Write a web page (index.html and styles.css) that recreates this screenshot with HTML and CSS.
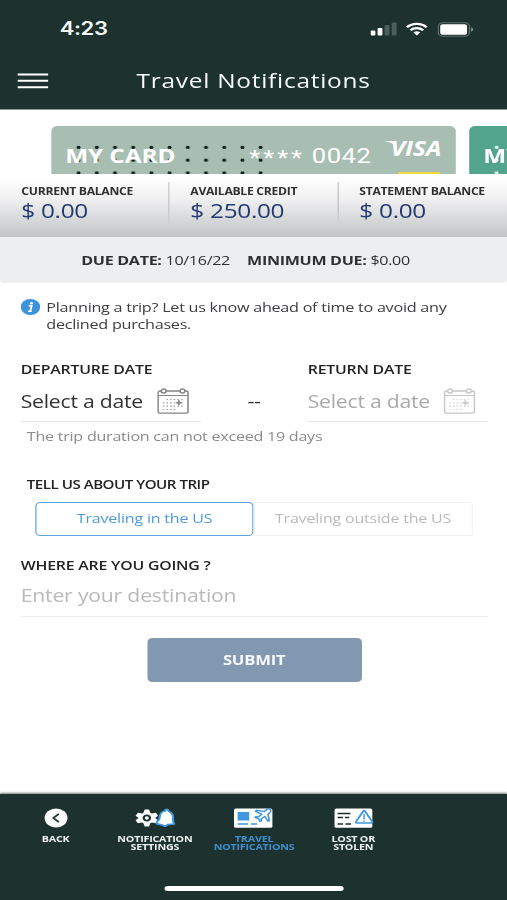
FILE: index.html
```html
<!DOCTYPE html>
<html lang="en">
<head>
<meta charset="utf-8">
<title>Travel Notifications</title>
<link rel="stylesheet" href="styles.css">
</head>
<body>
<svg width="0" height="0" class="defs">
  <symbol id="calendar" viewBox="0 0 26 26">
    <g fill="none" stroke="currentColor" stroke-width="1.3">
      <rect x=".7" y="3" width="24.6" height="22.2" rx="1.6"/>
      <path d="M1 7.6h24" stroke-width="1"/>
      <circle cx="5.3" cy="3" r="2" fill="#fff"/>
      <circle cx="20.7" cy="3" r="2" fill="#fff"/>
    </g>
    <g stroke="currentColor" stroke-width="1.2" stroke-dasharray="1.3 1.7" opacity=".75">
      <path d="M7.5 11.5h14M4.5 14.8h17M4.5 18.2h17M4.5 21.5h11"/>
    </g>
    <path d="M17.8 12.3v5M15.5 14.8h4.6" stroke="currentColor" stroke-width="1.5"/>
  </symbol>
</svg>
<div class="screen">
  <header class="header">
    <div class="status">
      <span class="time">4:23</span>
      <svg class="signal" width="22" height="14" viewBox="0 0 22 14" fill="#fff">
        <rect x="0" y="8.5" width="4" height="5" rx="1"/>
        <rect x="5.8" y="6" width="4" height="7.5" rx="1"/>
        <rect x="11.6" y="3" width="4" height="10.5" rx="1" opacity=".22"/>
        <rect x="17.4" y=".5" width="4" height="13" rx="1" opacity=".22"/>
      </svg>
      <svg class="wifi" width="18" height="14" viewBox="0 0 18 14" fill="none" stroke="#fff" stroke-width="2.3">
        <path d="M.9 5.3a11.5 11.5 0 0 1 16.2 0M3.8 8.3a7.4 7.4 0 0 1 10.4 0"/>
        <path d="M6.2 10.6a4 4 0 0 1 5.6 0L9 13.4z" fill="#fff" stroke="none"/>
      </svg>
      <svg class="battery" width="30" height="15" viewBox="0 0 30 15">
        <rect x=".6" y=".8" width="25.6" height="13.4" rx="3.8" fill="none" stroke="#fff" stroke-opacity=".3" stroke-width="1.1"/>
        <rect x="2.2" y="2.3" width="22" height="10.4" rx="2.3" fill="#fff"/>
        <path d="M27.6 5.2q1.6.8 1.6 2.3t-1.6 2.3z" fill="#fff" opacity=".5"/>
      </svg>
    </div>
    <div class="titlebar">
      <svg class="menu" width="26" height="16" viewBox="0 0 26 16" stroke="#fff" stroke-width="2"><path d="M.5 1.5h25M.5 7.8h25M.5 14.2h25"/></svg>
      <h1 class="title">Travel Notifications</h1>
    </div>
  </header>

  <section class="cards">
    <div class="card">
      <span class="card-name">MY CARD</span>
      <span class="card-number"><span class="stars">****</span> 0042</span>
      <span class="visa">VISA</span>
      <svg class="flag" width="9" height="5" viewBox="0 0 9 5"><path d="M0 0h6.5Q8.500 0 9 5 5 1.200 0 .6z" fill="#fff"/></svg>
      <i class="chip"></i>
    </div>
    <div class="card card-next"><span class="card-name">MY</span></div>
  </section>

  <section class="balances">
    <div class="balance"><span class="label">CURRENT BALANCE</span><span class="amount">$ 0.00</span></div>
    <div class="balance"><span class="label">AVAILABLE CREDIT</span><span class="amount">$ 250.00</span></div>
    <div class="balance"><span class="label">STATEMENT BALANCE</span><span class="amount">$ 0.00</span></div>
  </section>

  <section class="due">
    <span><b>DUE DATE:</b> 10/16/22</span>
    <span><b>MINIMUM DUE:</b> $0.00</span>
  </section>

  <main class="form">
    <div class="info">
      <svg width="16" height="16" viewBox="0 0 16 16"><circle cx="8" cy="8" r="8" fill="#3d92dc"/><circle cx="8.9" cy="4.2" r="1.2" fill="#fff"/><path d="M6.5 6.7h2.5L7.9 12M6 12.2h3" fill="none" stroke="#fff" stroke-width="1.5"/></svg>
      <p>Planning a trip? Let us know ahead of time to avoid any<br>declined purchases.</p>
    </div>
    <div class="dates">
      <div class="date">
        <h2 class="heading">DEPARTURE DATE</h2>
        <div class="picker"><span>Select a date</span><svg width="26" height="26"><use href="#calendar"/></svg></div>
      </div>
      <span class="dash">--</span>
      <div class="date off">
        <h2 class="heading">RETURN DATE</h2>
        <div class="picker"><span>Select a date</span><svg width="26" height="26"><use href="#calendar"/></svg></div>
      </div>
    </div>
    <p class="hint">The trip duration can not exceed 19 days</p>
    <h2 class="heading trip">TELL US ABOUT YOUR TRIP</h2>
    <div class="toggle">
      <span class="option selected">Traveling in the US</span>
      <span class="option">Traveling outside the US</span>
    </div>
    <h2 class="heading where">WHERE ARE YOU GOING ?</h2>
    <div class="destination">Enter your destination</div>
    <div class="submit">SUBMIT</div>
  </main>

  <footer class="footer">
    <nav class="tabs">
      <div class="tab">
        <svg width="20" height="20" viewBox="0 0 20 20"><circle cx="10" cy="10" r="9.4" fill="#fff"/><path d="M12.3 5.8L7.8 10l4.5 4.2" fill="none" stroke="#1d322e" stroke-width="1.6"/></svg>
        <span>BACK</span>
      </div>
      <div class="tab">
        <svg width="34" height="20" viewBox="0 0 34 20">
          <path d="M8.7 1.4h3.600l1 3.400 1.200.7 3.400-.8 1.800 3-2.400 2.300 2.400 2.300-1.800 3-3.400-.8-1.200.7-1 3.400H8.700l-1-3.400-1.200-.7-3.400.8-1.800-3L3.700 10 1.300 7.700l1.800-3 3.400.8 1.200-.7z" fill="#fff"/>
          <circle cx="10.500" cy="10" r="2.600" fill="#fff" stroke="#1d322e" stroke-width="1.900"/>
          <path d="M25.600 1.800q1.200-1 2.200 0l.6 1.400q4 2.200 3.500 6.800l.2 3.800 1 2.200-5.500.6q-1.800 2.600-3.800.7l-5.400-1.700.5-2.200 1.700-1.700.8-4.600Q22.300 3.400 25.600 3z" fill="#fff" stroke="#4098e2" stroke-width="1.700" stroke-linejoin="round"/>
        </svg>
        <span>NOTIFICATION<br>SETTINGS</span>
      </div>
      <div class="tab active">
        <svg width="34" height="20" viewBox="0 0 34 20">
          <rect x="1" y=".4" width="31.500" height="19.400" rx="1.600" fill="#fff"/>
          <path d="M4 4h9.500v8.500H4z" fill="#4098e2"/>
          <path d="M4 16h8.500M15 16h5" stroke="#4098e2" stroke-width="1.500"/>
          <path d="M30.500 1.300q-1.300-.9-2.600.3l-2.100 2-6.200-1.300-1 1 5 2.900-2.500 2.700-2-.3-.8.8 2.900 1.500 1.400 2.700.9-.8-.1-2 2.900-2.300 2.500 4.800 1.100-.9-1-6 1.800-2.300q1-1.700-.2-2.800z" fill="#fff" stroke="#4098e2" stroke-width="1.400" stroke-linejoin="round"/>
        </svg>
        <span>TRAVEL<br>NOTIFICATIONS</span>
      </div>
      <div class="tab">
        <svg width="34" height="20" viewBox="0 0 34 20">
          <rect x="1.500" y=".4" width="31" height="19.400" rx="1.600" fill="#fff"/>
          <path d="M4 5.500h10.500M4 9.500h4.500M10 9.500h3.500M4 16h4.500M10.500 16h4.500" stroke="#1d322e" stroke-width="1.700"/>
          <path d="M25.200 3q.6-.9 1.200 0l6 10.700q.4 1.200-.8 1.300H19.800q-1.200-.1-.7-1.300z" fill="#fff" stroke="#4098e2" stroke-width="1.600"/>
          <path d="M25.700 6v5.500M25.700 12.400v1.400" stroke="#4098e2" stroke-width="1.200"/>
        </svg>
        <span>LOST OR<br>STOLEN</span>
      </div>
    </nav>
    <i class="home"></i>
  </footer>
</div>
</body>
</html>
```
FILE: styles.css
```css
* { box-sizing: border-box; }
html, body { margin: 0; width: 507px; height: 900px; overflow: hidden; background: #fff; }
.defs { display: block; height: 0; }

/* 416-unit wide layout, widened to fill the window */
.screen {
  width: 416px;
  height: 900px;
  display: flex;
  flex-direction: column;
  transform: scaleX(1.21875);
  transform-origin: 0 0;
  font-family: "Open Sans", sans-serif;
  color: #303033;
  white-space: nowrap;
}
h1, h2, p { margin: 0; }
svg { display: block; flex: none; }

.header { height: 110px; background: #1d322e; border-bottom: 1px solid #8e9996; color: #f6faf8; }
.status { display: flex; align-items: center; height: 58px; padding-left: 49px; }
.time { width: 255px; font: 600 18px/24px Inter, sans-serif; letter-spacing: -.3px; }
.wifi { margin-left: 7px; }
.battery { margin-left: 8px; }
.titlebar { display: flex; align-items: center; height: 46px; padding-left: 14px; }
.title { margin-left: 72px; font-size: 20px; font-weight: 400; letter-spacing: .63px; line-height: 28px; }

.cards { display: flex; gap: 11px; height: 64px; padding: 16px 0 0 42px; overflow: hidden; }
.card {
  flex: none;
  display: flex;
  position: relative;
  width: 332px;
  height: 190px;
  padding: 14.5px 0 0 11.5px;
  border-radius: 5px;
  color: #fff;
  line-height: 30px;
  background: #a8beb3;
}
.card::before {
  content: "";
  position: absolute;
  left: 15px;
  top: 15px;
  width: 164px;
  height: 51px;
  background: radial-gradient(circle, #15211d 1.4px, transparent 1.9px) 0 0 / 14.95px 12.8px;
}
.card-name { position: relative; width: 151px; font-size: 20px; font-weight: 700; letter-spacing: -.1px; }
.card-number { position: relative; width: 116px; font: 400 21px/30px Roboto, sans-serif; letter-spacing: .4px; }
.stars { position: relative; top: 2px; letter-spacing: 2.4px; }
.visa { font-size: 20.5px; font-weight: 700; font-style: italic; line-height: 15px; letter-spacing: -.2px; }
.flag { position: absolute; left: 274px; top: 14.5px; }
.chip { position: absolute; left: 285px; top: 46px; width: 34px; height: 20px; background: #efd93f; }
.card-next { background: #52a58c; }
.card-next::before { background-image: radial-gradient(circle, #e4f3ee 1.4px, transparent 1.9px); }

.balances { display: flex; height: 63px; background: linear-gradient(#fff 5%, #f0f0f1 40%, #c3c5c8); border-bottom: 1px solid #bfc1c2; }
.balance { flex: 1; display: flex; flex-direction: column; padding: 10px 0 0 17.5px; position: relative; }
.balance + .balance::before { content: ""; position: absolute; left: -.5px; top: 8px; width: 1px; height: 46px; background: linear-gradient(#bcbec2 60%, #d4d5d7); }
.label { font-size: 10px; font-weight: 700; line-height: 14px; letter-spacing: -.26px; }
.amount { font-size: 20px; line-height: 26px; letter-spacing: -.25px; color: #233a70; }

.due { display: flex; justify-content: center; gap: 14px; height: 46px; padding-right: 13px; background: #edeeef; border-radius: 0 0 3px 3px; font-size: 13.2px; line-height: 47px; letter-spacing: -.25px; }

.form { flex: 1; padding: 16px 16px 0 17px; }
.info { display: flex; gap: 5px; font-size: 13.3px; line-height: 17px; letter-spacing: -.23px; color: #3e3e42; }
.dates { display: flex; justify-content: space-between; margin-top: 26px; }
.date { width: 147.5px; }
.heading { font-size: 13px; font-weight: 600; line-height: 20px; letter-spacing: -.17px; color: #222; }
.picker { display: flex; justify-content: space-between; height: 43px; padding: 9px 9.5px 0 0; border-bottom: 1px solid #e6e6e6; font-size: 17.4px; line-height: 26px; letter-spacing: -.2px; color: #333; }
.picker svg { color: #858585; }
.off .picker { color: #aaa; }
.off .picker svg { color: #c8c8c8; }
.dash { font-size: 18px; line-height: 26px; padding-top: 29px; letter-spacing: -.3px; }
.hint { margin: 3.5px 0 0 5px; font-size: 13.2px; line-height: 20px; letter-spacing: -.2px; color: #8a8a8a; }
.trip { margin: 29.5px 0 0 5px; font-size: 12.4px; letter-spacing: -.4px; }
.toggle { display: flex; width: 358.5px; height: 34px; margin: 7px 0 0 12px; }
.option { flex: 1; border: 1px solid #f1f1f1; border-radius: 2px; text-align: center; font-size: 13.1px; line-height: 31px; letter-spacing: -.14px; color: #b9b9b9; }
.selected { border: 1.5px solid #5aa3e0; border-radius: 4px; color: #4c9adc; }
.where { margin-top: 19px; }
.destination { height: 42px; border-bottom: 1.5px solid #ececec; font-size: 17.4px; line-height: 40px; letter-spacing: -.17px; color: #b9b9b9; }
.submit { width: 176px; height: 44px; margin: 21px 0 0 103.5px; border-radius: 4px; background: #8298b0; color: #f5f8fc; text-align: center; font-size: 13.7px; font-weight: 700; line-height: 43px; letter-spacing: -.2px; }

.footer { height: 106px; background: #1d322e; box-shadow: 0 -1px 2px #777; display: flex; flex-direction: column; align-items: flex-start; }
.tabs { display: flex; height: 92px; padding: 14px 0 0 5px; }
.tab { width: 81.4px; display: flex; flex-direction: column; align-items: center; gap: 7px; color: #edf3f1; font-size: 8.8px; font-weight: 700; line-height: 8.4px; letter-spacing: -.18px; text-align: center; }
.active { color: #3d8fce; }
.home { width: 147px; height: 5px; margin-left: 135px; border-radius: 3px; background: #fff; }
```
